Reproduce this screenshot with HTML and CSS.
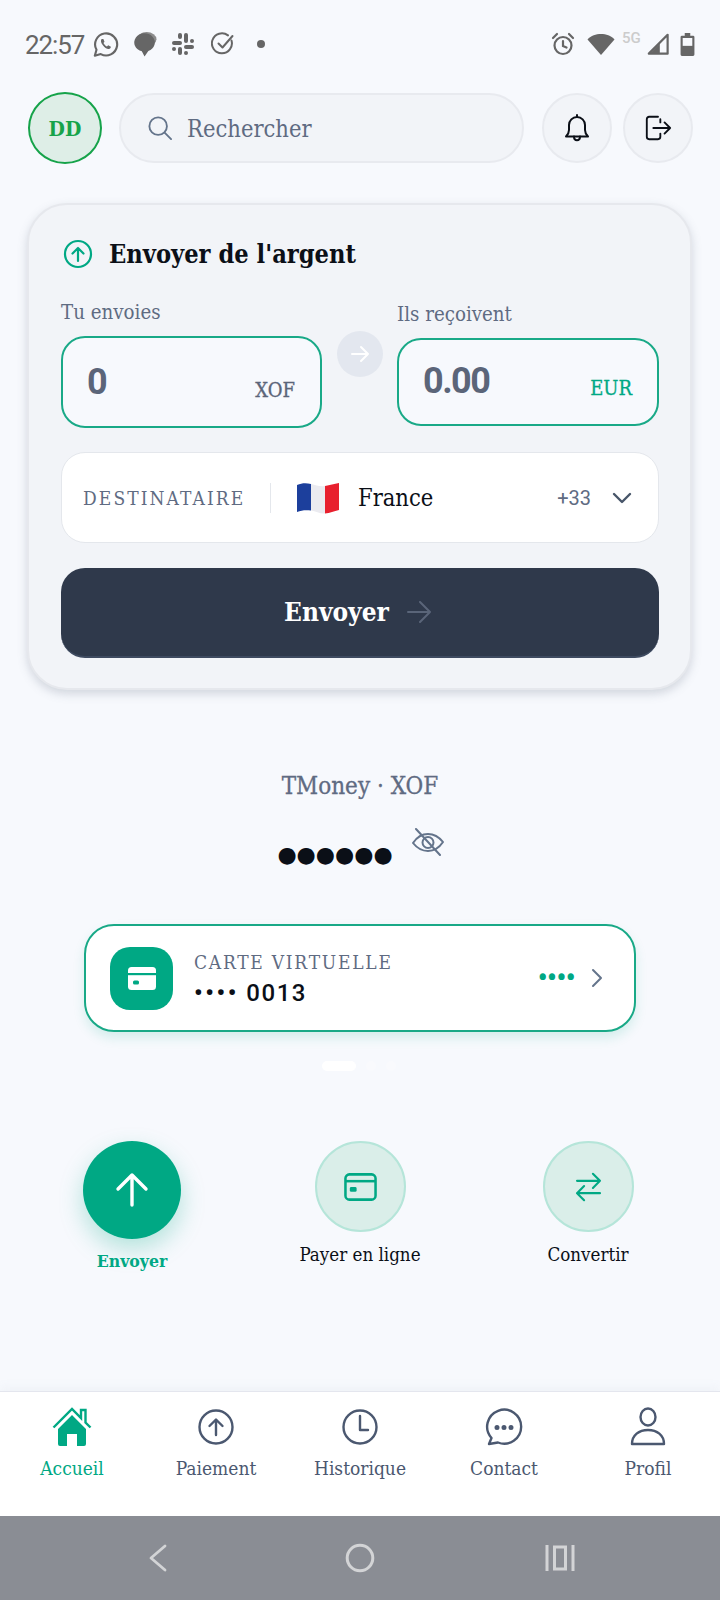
FILE: index.html
```html
<!DOCTYPE html>
<html lang="fr">
<head>
<meta charset="utf-8">
<title>Accueil</title>
<link rel="stylesheet" href="styles.css">
</head>
<body>
<div class="screen">
  <div class="status">
    <span class="time">22:57</span>
    <svg class="st st-wa" viewBox="0 0 24 24"><path d="M2.500 22l1.500-5.300A9.800 9.800 0 1 1 7.800 20.500z" fill="none" stroke="#666" stroke-width="1.900" stroke-linejoin="round"/><path d="M8.600 7c-1 1-.9 3 .9 5.400 1.800 2.400 3.900 3.900 5.500 3.600 1-.2 1.800-1 1.800-2.100l-2.400-1.200-1.100 1c-1.300-.5-2.500-1.800-3.100-3.100l.9-1.100-1-2.500z" fill="#666"/></svg>
    <svg class="st st-chat" viewBox="0 0 24 24"><ellipse cx="14.500" cy="7.500" rx="9" ry="6.500" fill="#8c8c8c"/><path d="M12.500 23.500l-2.500-4.700A9.500 8.500 0 1 1 16 18.500z" fill="#666"/></svg>
    <svg class="st st-slack" viewBox="0 0 24 24" fill="#666"><rect x="1" y="9" width="10" height="4" rx="2"/><rect x="7" y="1" width="4" height="6" rx="2"/><rect x="13" y="1" width="4" height="10" rx="2"/><rect x="19" y="7" width="4" height="4" rx="2"/><rect x="13" y="13" width="10" height="4" rx="2"/><rect x="13" y="19" width="4" height="4" rx="2"/><rect x="7" y="15" width="4" height="8" rx="2"/><rect x="1" y="15" width="4" height="4" rx="2"/></svg>
    <svg class="st st-check" viewBox="0 0 24 24" fill="none" stroke="#666" stroke-width="2" stroke-linecap="round" stroke-linejoin="round"><path d="M20.500 8.500A10 10 0 1 1 17 3.400"/><path d="M7.500 11.500l4 4 10-11.500"/></svg>
    <span class="st-dot"></span>
    <span class="st-gap"></span>
    <svg class="st st-alarm" viewBox="0 0 24 24" fill="none" stroke="#666" stroke-width="2.200" stroke-linecap="round"><circle cx="12" cy="13.500" r="8.500"/><path d="M12 9v5l3.500 1.500"/><path d="M2 6l4-4M22 6l-4-4"/></svg>
    <svg class="st st-wifi" viewBox="0 0 28 24"><path d="M14 23L.500 7.500C4 3.500 9 2 14 2s10 1.500 13.500 5.500z" fill="#666"/></svg>
    <span class="st-5g">5G</span>
    <svg class="st st-signal" viewBox="0 0 24 24"><path d="M22.500 2v20.500H2z" fill="none" stroke="#666" stroke-width="2.400" stroke-linejoin="round"/><path d="M14 11.500v11H3z" fill="#666"/></svg>
    <svg class="st st-batt" viewBox="0 0 16 26"><path d="M5 1h6v3h3a1.500 1.500 0 0 1 1.500 1.500v19A1.500 1.500 0 0 1 14 26H2A1.500 1.500 0 0 1 .500 24.500v-19A1.500 1.500 0 0 1 2 4h3z" fill="#666"/><rect x="2.800" y="6.500" width="10.400" height="8.500" fill="#f7f9fd"/></svg>
  </div>

  <header class="top">
    <div class="avatar">DD</div>
    <div class="search">
      <svg class="search-ico" viewBox="0 0 26 26" fill="none" stroke="#64748b" stroke-width="2" stroke-linecap="round"><circle cx="11" cy="11" r="9.500"/><path d="M18 18l7 7"/></svg>
      <span class="search-text">Rechercher</span>
    </div>
    <button class="round"><svg class="ico28" viewBox="0 0 28 30" fill="none" stroke="#0b0f17" stroke-width="2" stroke-linecap="round" stroke-linejoin="round"><path d="M3 23.500c2-2 3-3.500 3-6.500v-5a8 8 0 0 1 16 0v5c0 3 1 4.500 3 6.500z"/><path d="M14 2v2M11 23.500c0 5 6 5 6 0"/></svg></button>
    <button class="round"><svg class="ico28" viewBox="0 0 30 30" fill="none" stroke="#0b0f17" stroke-width="2" stroke-linecap="round" stroke-linejoin="round"><path d="M15 3H5.500A2.500 2.500 0 0 0 3 5.500v19A2.500 2.500 0 0 0 5.500 27H15a2.500 2.500 0 0 0 2.500-2.500V21M17.500 9V5.500"/><path d="M10 15h18M22 9l6 6-6 6"/></svg></button>
  </header>

  <section class="send-card">
    <div class="send-title">
      <svg class="title-ico" viewBox="0 0 30 30" fill="none" stroke="#00a884" stroke-width="2.200" stroke-linecap="round" stroke-linejoin="round"><circle cx="15" cy="15" r="13"/><path d="M15 22V9M9.500 14.500L15 9l5.500 5.500"/></svg>
      <h1>Envoyer de l'argent</h1>
    </div>
    <div class="exchange">
      <div class="col-left">
        <label class="field-label">Tu envoies</label>
        <div class="amount amount-left"><span class="value value-left">0</span><span class="cur">XOF</span></div>
      </div>
      <div class="swap"><svg viewBox="0 0 20 20" fill="none" stroke="#fff" stroke-width="2" stroke-linecap="round" stroke-linejoin="round"><path d="M2 10h16M11 3l7 7-7 7"/></svg></div>
      <div class="col-right">
        <label class="field-label">Ils reçoivent</label>
        <div class="amount amount-right"><span class="value">0.00</span><span class="cur cur-green">EUR</span></div>
      </div>
    </div>
    <div class="dest">
      <span class="dest-label">DESTINATAIRE</span>
      <span class="dest-sep"></span>
      <svg class="flag" viewBox="0 0 42 32"><defs><clipPath id="fl"><path d="M0 3c5-2 9-2 14-1s9 3 14 2 9-2 14-3v27c-5 1-9 3-14 3.500S19 29 14 28.500 5 28 0 30z"/></clipPath></defs><g clip-path="url(#fl)"><rect width="14" height="32" fill="#1c3f9c"/><rect x="14" width="14" height="32" fill="#ebebf0"/><rect x="28" width="14" height="32" fill="#e8202e"/></g></svg>
      <span class="dest-name">France</span>
      <span class="dest-code">+33</span>
      <svg class="chev" viewBox="0 0 20 12" fill="none" stroke="#475569" stroke-width="2.400" stroke-linecap="round" stroke-linejoin="round"><path d="M2 2l8 8 8-8"/></svg>
    </div>
    <button class="send-btn">
      <span>Envoyer</span>
      <svg class="send-arrow" viewBox="0 0 24 22" fill="none" stroke="#5a6579" stroke-width="2" stroke-linecap="round" stroke-linejoin="round"><path d="M1 11h22M13 1l10 10-10 10"/></svg>
    </button>
  </section>

  <section class="balance">
    <div class="balance-label">TMoney · XOF</div>
    <div class="balance-row">
      <span class="balance-dots">●●●●●●</span>
      <svg class="eye" viewBox="0 0 34 28" fill="none" stroke="#64748b" stroke-width="2" stroke-linecap="round" stroke-linejoin="round"><path d="M2 15c4-6 9-9 15-9s11 3 15 8c-4 6-9 9-15 9s-11-3-15-8z"/><circle cx="17" cy="14.500" r="5.500"/><path d="M5 1l24 26"/></svg>
    </div>
  </section>

  <div class="vcard">
    <div class="vcard-ico"><svg viewBox="0 0 28 24"><rect y="1" width="28" height="23" rx="3.500" fill="#fff"/><rect y="7" width="28" height="2.200" fill="#00a884"/><rect x="5" y="14.500" width="6" height="4" rx="1.500" fill="#00a884"/></svg></div>
    <div class="vcard-text">
      <div class="vcard-label">CARTE VIRTUELLE</div>
      <div class="vcard-num"><span class="vcard-b">••••</span> 0013</div>
    </div>
    <span class="vcard-dots">••••</span>
    <svg class="vcard-chev" viewBox="0 0 12 20" fill="none" stroke="#64748b" stroke-width="2" stroke-linecap="round" stroke-linejoin="round"><path d="M2 2l8 8-8 8"/></svg>
  </div>

  <div class="pager"><span class="p-on"></span><span class="p-off"></span><span class="p-off"></span></div>

  <div class="actions">
    <div class="action">
      <div class="act-main"><svg viewBox="0 0 34 36" fill="none" stroke="#fff" stroke-width="3.400" stroke-linecap="round" stroke-linejoin="round"><path d="M17 33V3M3 17L17 3l14 14"/></svg></div>
      <span class="act-label act-label-on">Envoyer</span>
    </div>
    <div class="action">
      <div class="act-soft"><svg viewBox="0 0 34 30" fill="none" stroke="#00a884" stroke-width="2.600"><rect x="1.500" y="2" width="31" height="26" rx="4"/><path d="M1.500 9h31"/><rect x="6" y="15" width="7" height="5" rx="1.500" fill="#00a884" stroke="none"/></svg></div>
      <span class="act-label">Payer en ligne</span>
    </div>
    <div class="action">
      <div class="act-soft"><svg viewBox="0 0 30 34" fill="none" stroke="#00a884" stroke-width="2.400" stroke-linecap="round" stroke-linejoin="round"><path d="M2 10h26M20 2l8 8-8 8M28 24H2M10 16l-8 8 8 8"/></svg></div>
      <span class="act-label">Convertir</span>
    </div>
  </div>

  <nav class="tabbar">
    <div class="tab tab-on">
      <svg viewBox="0 0 40 40"><path d="M1.500 20.500L20 2l9 9V3h4.500v12.500l5 5" fill="none" stroke="#00a884" stroke-width="2.400"/><path d="M6 22L20 8l14 14v15a2 2 0 0 1-2 2h-7V27H15v12H8a2 2 0 0 1-2-2z" fill="#00a884"/></svg>
      <span>Accueil</span>
    </div>
    <div class="tab">
      <svg viewBox="0 0 40 40" fill="none" stroke="#4b5870" stroke-width="2.400" stroke-linecap="round" stroke-linejoin="round"><circle cx="20" cy="20" r="16.500"/><path d="M20 28V13M13.500 19L20 12.500 26.500 19"/></svg>
      <span>Paiement</span>
    </div>
    <div class="tab">
      <svg viewBox="0 0 40 40" fill="none" stroke="#4b5870" stroke-width="2.400" stroke-linecap="round" stroke-linejoin="round"><circle cx="20" cy="20" r="16.500"/><path d="M20 9v14h8"/></svg>
      <span>Historique</span>
    </div>
    <div class="tab">
      <svg viewBox="0 0 40 40" fill="none" stroke="#4b5870" stroke-width="2.400" stroke-linecap="round" stroke-linejoin="round"><path d="M5 37l2.500-6A17 17 0 1 1 14 35.500z"/><circle cx="13" cy="20.500" r="1.300" fill="#4b5870"/><circle cx="20" cy="20.500" r="1.300" fill="#4b5870"/><circle cx="27" cy="20.500" r="1.300" fill="#4b5870"/></svg>
      <span>Contact</span>
    </div>
    <div class="tab">
      <svg viewBox="0 0 40 40" fill="none" stroke="#4b5870" stroke-width="2.400" stroke-linecap="round" stroke-linejoin="round"><ellipse cx="20" cy="10" rx="7.500" ry="8.500"/><path d="M4 37c0-9 7-14 16-14s16 5 16 14z"/></svg>
      <span>Profil</span>
    </div>
  </nav>

  <div class="sysnav">
    <svg class="sys-back" viewBox="0 0 20 28" fill="none" stroke="#d3d4d6" stroke-width="2.800" stroke-linecap="round" stroke-linejoin="round"><path d="M17 2L3 14l14 12"/></svg>
    <svg class="sys-home" viewBox="0 0 30 30" fill="none" stroke="#d3d4d6" stroke-width="3"><circle cx="15" cy="15" r="12.800"/></svg>
    <svg class="sys-rec" viewBox="0 0 30 28" fill="none" stroke="#d3d4d6" stroke-width="3"><path d="M2 1v26M28 1v26"/><rect x="9.500" y="3" width="11" height="22"/></svg>
  </div>
</div>
</body>
</html>
```

FILE: styles.css
```css
* { box-sizing: border-box; }
html, body { margin: 0; padding: 0; }
body { font-family: "DejaVu Serif Condensed", "DejaVu Serif", serif; }
.screen { width: 720px; height: 1600px; background: #f7f9fd; display: flex; flex-direction: column; overflow: hidden; }

.status { height: 86px; padding: 2px 25px 0 25px; display: flex; align-items: center; flex: none; }
.time { font-family: Roboto, sans-serif; font-size: 26px; color: #666; letter-spacing: -1.100px; width: 68px; margin-top: 2px; }
.st { display: block; flex: none; }
.st-wa { width: 27px; height: 27px; margin-left: -1px; margin-right: 12px; }
.st-chat { width: 26px; height: 28px; margin-right: 14px; }
.st-slack { width: 24px; height: 24px; margin-right: 16px; }
.st-check { width: 24px; height: 24px; margin-right: 22px; }
.st-dot { width: 8px; height: 8px; border-radius: 50%; background: #666; }
.st-gap { flex: 1; }
.st-alarm { width: 24px; height: 26px; margin-right: 12px; }
.st-wifi { width: 28px; height: 24px; margin-right: 7px; }
.st-5g { font-family: Roboto, sans-serif; font-size: 15px; color: #ccc; font-weight: 500; align-self: flex-start; margin-top: 27px; margin-right: 3px; width: 22px; }
.st-signal { width: 22px; height: 24px; margin-right: 11px; }
.st-batt { width: 15px; height: 24px; }

.top { height: 72px; padding-left: 28px; display: flex; align-items: center; flex: none; margin-top: 6px; }
.avatar { width: 74px; height: 72px; border-radius: 50%; border: 2px solid #16a34a; background: #deeee7; color: #16a34a; font-weight: 700; font-size: 21px; display: flex; align-items: center; justify-content: center; flex: none; }
.search { width: 405px; height: 70px; margin-left: 17px; border-radius: 35px; background: #f2f4f8; border: 2px solid #e8eaef; display: flex; align-items: center; padding-left: 27px; color: #5f6b82; font-size: 23.500px; flex: none; }
.search-ico { width: 24px; height: 24px; margin-right: 15px; }
.search-text { margin-top: 2px; }
.round { width: 70px; height: 70px; border-radius: 50%; background: #f2f4f8; border: 2px solid #e8eaef; padding: 0; display: flex; align-items: center; justify-content: center; flex: none; margin-left: 11px; }
.search + .round { margin-left: 18px; }
.ico28 { width: 28px; height: 30px; }

.send-card { width: 665px; height: 487px; margin: 39px 0 0 27px; flex: none; padding: 35px 30px 0 32px; border-radius: 40px; background: #f2f4f8; border: 2px solid #e6e8ed; box-shadow: 0 4px 10px rgba(100, 110, 130, .25); }
.send-title { display: flex; align-items: center; height: 28px; margin-left: 2px; }
.title-ico { width: 30px; height: 30px; flex: none; }
.send-title h1 { margin: 0 0 0 16px; font-size: 25.200px; font-weight: 700; color: #0b0f17; }
.exchange { display: flex; margin-top: 32px; align-items: flex-start; }
.col-left { width: 261px; flex: none; }
.col-right { width: 262px; flex: none; padding-top: 2px; }
.field-label { display: block; height: 24px; line-height: 24px; font-size: 20.300px; color: #5f6b82; margin-bottom: 12px; }
.amount { border: 2px solid #19a987; border-radius: 24px; background: #f7f9fd; display: flex; justify-content: space-between; padding: 0 26px 0 24px; }
.amount-left { height: 92px; }
.amount-right { height: 88px; }
.value { font-family: Roboto, sans-serif; font-weight: 700; font-size: 36px; letter-spacing: -1.500px; color: #5b6579; margin-top: 20px; line-height: 42px; }
.value-left { margin-top: 23px; }
.cur { font-size: 20px; color: #5b6579; align-self: flex-end; margin-bottom: 24px; margin-right: -1px; -webkit-text-stroke: .3px #5b6579; }
.cur-green { color: #00a884; -webkit-text-stroke: .3px #00a884; }
.swap { width: 46px; height: 46px; border-radius: 50%; background: #e3e7ef; margin: 31px 14px 0 15px; display: flex; align-items: center; justify-content: center; flex: none; }
.swap svg { width: 20px; height: 20px; }
.dest { margin-top: 24px; height: 91px; width: 598px; border-radius: 24px; background: #fff; border: 1.500px solid #e4e7ec; display: flex; align-items: center; padding: 0 26px 0 21px; }
.dest-label { font-size: 19px; letter-spacing: 2.100px; color: #5f6b82; width: 187px; flex: none; }
.dest-sep { width: 1px; height: 30px; background: #e4e7ec; flex: none; }
.flag { width: 42px; height: 32px; margin: 0 19px 0 26px; flex: none; }
.dest-name { font-size: 23.500px; color: #0b0f17; flex: 1; }
.dest-code { font-family: Roboto, sans-serif; font-size: 20px; color: #5f6b82; margin-right: 21px; }
.chev { width: 20px; height: 12px; flex: none; }
.send-btn { margin-top: 25px; width: 598px; height: 90px; border: 0; border-bottom: 2px solid #3e4a60; border-radius: 24px; background: #2f394b; color: #fff; font: inherit; font-size: 26px; font-weight: 700; display: flex; align-items: center; justify-content: center; gap: 18px; padding: 0 5px 0 0; }
.send-arrow { width: 24px; height: 22px; }

.balance { margin-top: 81px; flex: none; display: flex; flex-direction: column; align-items: center; }
.balance-label { height: 30px; line-height: 30px; font-size: 24px; color: #5f6b82; -webkit-text-stroke: .3px #5f6b82; }
.balance-row { height: 52px; margin-top: 28px; display: flex; align-items: flex-start; padding-left: 2px; }
.balance-dots { font-family: "DejaVu Sans", sans-serif; font-size: 22px; line-height: 34px; color: #0b0f17; margin-top: 9px; }
.eye { width: 34px; height: 28px; margin: -1px 0 0 18px; }

.vcard { width: 552px; height: 108px; margin: 43px 0 0 84px; flex: none; border-radius: 30px; background: #fff; border: 2px solid #19a987; box-shadow: 0 6px 12px rgba(0, 168, 132, .14); display: flex; align-items: center; padding: 0 31px 0 24px; }
.vcard-ico { width: 63px; height: 63px; border-radius: 20px; background: #00a884; display: flex; align-items: center; justify-content: center; flex: none; }
.vcard-ico svg { width: 28px; height: 24px; }
.vcard-text { margin: 3px 0 0 21px; flex: 1; }
.vcard-label { font-size: 19px; letter-spacing: 1.750px; color: #5f6b82; line-height: 26px; }
.vcard-num { font-family: Roboto, sans-serif; font-size: 24px; font-weight: 500; letter-spacing: 1.500px; color: #0b0f17; line-height: 34px; margin-top: 1px; }
.vcard-b { font-weight: 700; letter-spacing: 2.600px; }
.vcard-dots { font-family: Roboto, sans-serif; font-size: 27px; font-weight: 700; letter-spacing: -.4px; color: #00a884; margin-right: 16px; }
.vcard-chev { width: 12px; height: 20px; flex: none; }

.pager { display: flex; margin: 29px 0 0 322px; gap: 10px; height: 10px; align-items: center; flex: none; }
.p-on { width: 34px; height: 10px; border-radius: 5px; background: #fff; }
.p-off { width: 10px; height: 10px; border-radius: 50%; background: #f9fafd; }

.actions { display: grid; grid-template-columns: 228px 228px 228px; padding-left: 18px; margin-top: 70px; flex: none; }
.action { display: flex; flex-direction: column; align-items: center; }
.act-main { width: 98px; height: 98px; border-radius: 50%; background: #00a884; box-shadow: 0 10px 24px rgba(0, 168, 132, .28); display: flex; align-items: center; justify-content: center; }
.act-main svg { width: 34px; height: 36px; }
.act-soft { width: 91px; height: 91px; border-radius: 50%; background: #daeee9; border: 2px solid #b5e5d9; display: flex; align-items: center; justify-content: center; }
.act-soft svg { width: 33px; height: 30px; }
.act-label { font-size: 18.600px; line-height: 24px; color: #0b0f17; margin-top: 11px; }
.act-label-on { color: #00a884; font-weight: 700; font-size: 17.500px; margin-top: 10px; }

.tabbar { margin-top: auto; height: 125px; flex: none; background: #fff; border-top: 1px solid #e4e6ee; box-shadow: 0 -4px 10px rgba(120, 130, 160, .06); display: grid; grid-template-columns: repeat(5, 144px); }
.tab { display: flex; flex-direction: column; align-items: center; padding-top: 15px; color: #4b5870; font-size: 19px; }
.tab svg { width: 40px; height: 40px; }
.tab span { margin-top: 9px; line-height: 24px; }
.tab-on { color: #00a884; }

.sysnav { height: 84px; flex: none; background: #8a8d94; display: flex; align-items: center; padding: 0 0 0 148px; }
.sys-back { width: 20px; height: 28px; flex: none; }
.sys-home { width: 30px; height: 30px; flex: none; margin-left: 177px; }
.sys-rec { width: 30px; height: 28px; flex: none; margin-left: 170px; }
```
